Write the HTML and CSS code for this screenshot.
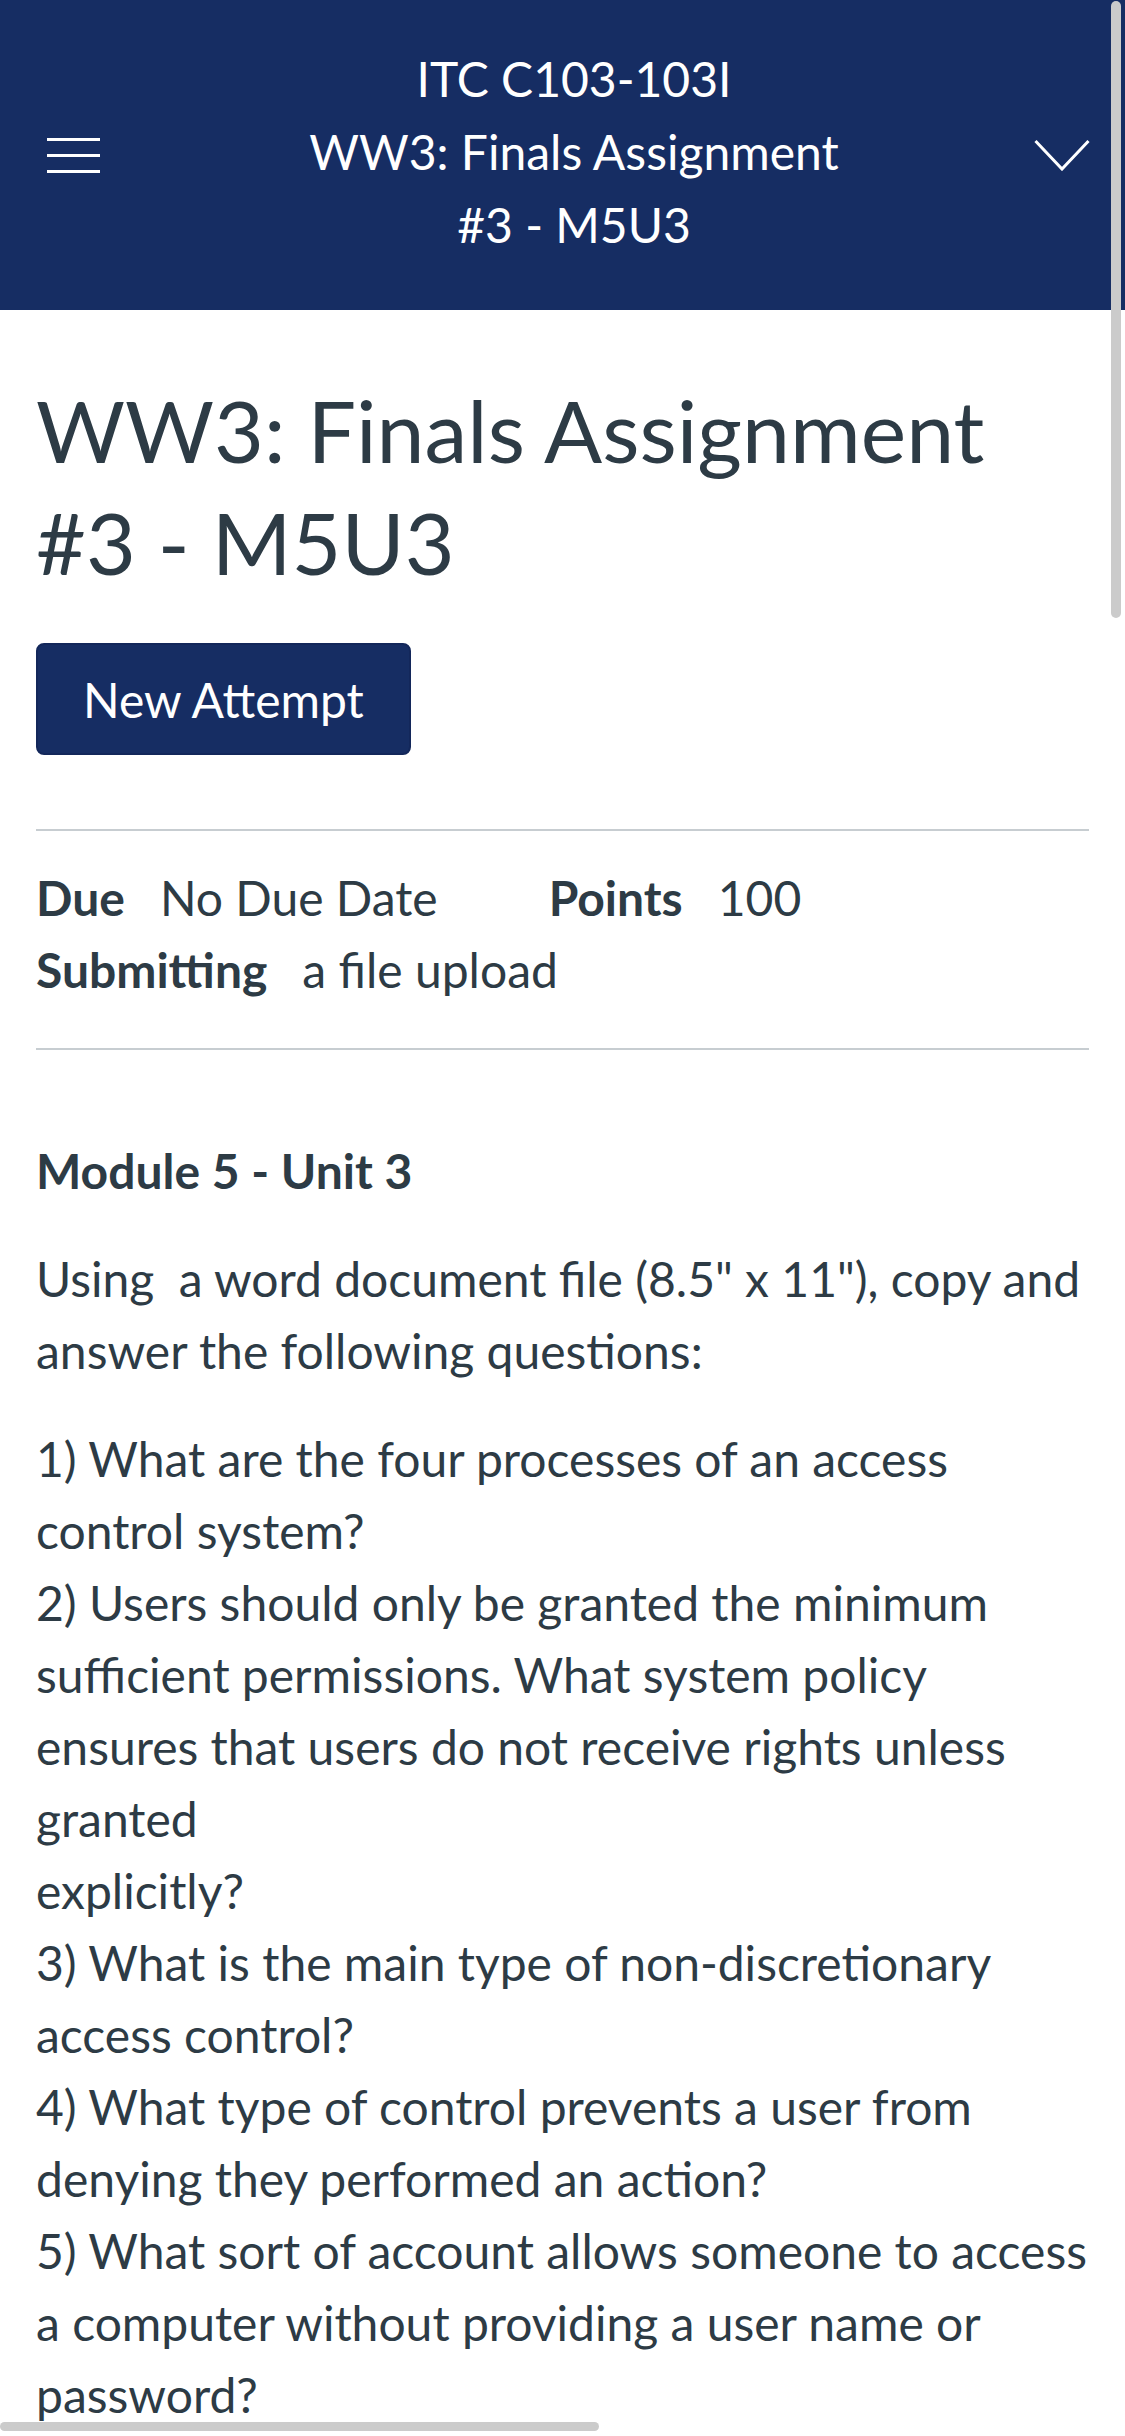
FILE: index.html
```html
<!DOCTYPE html>
<html lang="en">
<head>
<meta charset="utf-8">
<title>WW3: Finals Assignment #3 - M5U3</title>
<link rel="stylesheet" href="styles.css">
</head>
<body>
<header class="topbar">
  <div class="icon menu" aria-label="Menu">
    <span class="bar"></span><span class="bar"></span><span class="bar"></span>
  </div>
  <div class="topbar-center">
    <div class="topbar-title">ITC C103-103I<br>WW3: Finals Assignment #3 - M5U3</div>
  </div>
  <div class="icon chevron" aria-label="Expand">
    <svg width="56" height="32" viewBox="0 0 56 32"><polyline points="1.5,2 28,30 54.5,2" fill="none" stroke="#ffffff" stroke-width="3"/></svg>
  </div>
</header>

<main class="content">
  <h1 class="page-title">WW3: Finals Assignment #3 - M5U3</h1>
  <button class="primary-btn">New Attempt</button>

  <hr class="divider">
  <div class="meta">
    <div class="meta-item"><span class="meta-label">Due</span><span class="meta-value">No Due Date</span></div>
    <div class="meta-item"><span class="meta-label">Points</span><span class="meta-value">100</span></div>
    <div class="meta-item"><span class="meta-label">Submitting</span><span class="meta-value">a file upload</span></div>
  </div>
  <hr class="divider">

  <section class="description">
    <h2 class="module-heading">Module 5 - Unit 3</h2>
    <p>Using&nbsp; a word document file (8.5" x 11"), copy and answer the following questions:</p>
    <p>1) What are the four processes of an access control system?<br>2) Users should only be granted the minimum sufficient permissions. What system policy ensures that users do not receive rights unless granted<br>explicitly?<br>3) What is the main type of non-discretionary access control?<br>4) What type of control prevents a user from denying they performed an action?<br>5) What sort of account allows someone to access a computer without providing a user name or password?</p>
  </section>
</main>

<div class="scroll-v"></div>
<div class="scroll-h"></div>
</body>
</html>
```

FILE: styles.css
```css
html, body {
  margin: 0;
  padding: 0;
}
body {
  width: 1125px;
  height: 2436px;
  overflow: hidden;
  position: relative;
  background: #ffffff;
  font-family: Lato, "Liberation Sans", sans-serif;
  color: #2d3b45;
}

.topbar {
  height: 310px;
  background: #162d63;
  display: flex;
  align-items: center;
  padding: 0 35px 0 47px;
  box-sizing: border-box;
}
.icon {
  display: flex;
  flex: none;
}
.menu {
  width: 53px;
  flex-direction: column;
  gap: 13px;
}
.menu .bar {
  display: block;
  width: 53px;
  height: 3px;
  background: #ffffff;
}
.chevron {
  width: 56px;
  justify-content: flex-end;
}
.topbar-center {
  flex: 1;
  padding-left: 14px;
  display: flex;
  justify-content: center;
  margin-top: -8px;
}
.topbar-title {
  max-width: 560px;
  text-align: center;
  color: #ffffff;
  font-size: 48px;
  line-height: 73px;
}

.content {
  padding: 0 36px;
}
.page-title {
  margin: 64px 0 45px;
  font-size: 86px;
  line-height: 112px;
  font-weight: 400;
  color: #2d3b45;
}
.primary-btn {
  display: flex;
  align-items: center;
  height: 112px;
  padding: 0 45px;
  background: #162d63;
  color: #ffffff;
  border: 2px solid #13275a;
  border-radius: 8px;
  font-family: Lato, "Liberation Sans", sans-serif;
  font-size: 48px;
  margin: 0 0 74px;
}

.divider {
  border: 0;
  height: 2px;
  background: #c7cdd1;
  margin: 0;
}
.meta {
  display: flex;
  flex-wrap: wrap;
  column-gap: 111px;
  padding: 31px 0 42px;
  font-size: 48px;
  line-height: 72px;
}
.meta-item {
  display: flex;
  gap: 35px;
}
.meta-label {
  font-weight: 700;
}

.module-heading {
  margin: 85px 0 36px;
  font-size: 48px;
  line-height: 72px;
  font-weight: 700;
}
.description p {
  margin: 0 0 36px;
  font-size: 48px;
  line-height: 72px;
}

.scroll-v {
  position: absolute;
  top: 1px;
  right: 4px;
  width: 10px;
  height: 617px;
  border-radius: 5px;
  background: #cbcbcb;
}
.scroll-h {
  position: absolute;
  left: 0;
  top: 2422px;
  width: 599px;
  height: 9px;
  border-radius: 5px;
  background: #cbcbcb;
}
```
